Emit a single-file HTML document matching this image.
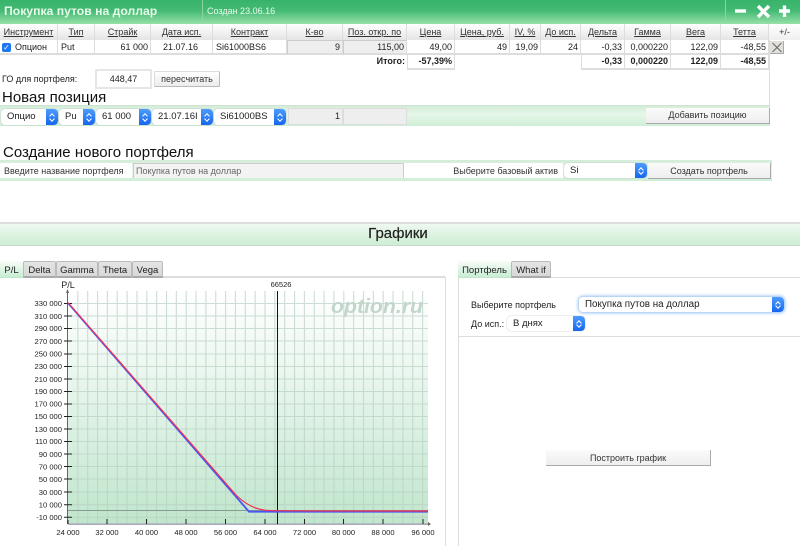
<!DOCTYPE html>
<html lang="ru"><head><meta charset="utf-8"><title>Покупка путов на доллар</title>
<style>
html,body{margin:0;padding:0;background:#fff}
#p{position:relative;width:800px;height:546px;overflow:hidden;background:#fff;font:9px "Liberation Sans",sans-serif;color:#222;filter:blur(.3px)}
#p div{position:absolute;box-sizing:border-box;white-space:nowrap}
.h{top:24px;height:16px;line-height:17px;text-align:center;background:linear-gradient(#fff,#e4e4e4);border-right:1px solid #ddd;text-decoration:underline;color:#333}
.c{top:40px;height:15px;line-height:15px;border-right:1px solid #ddd;border-bottom:2px solid #ddd;text-align:right;padding-right:2px}
.g{background:#eee!important;border-left:1px solid #ccc;border-top:1px solid #ccc;line-height:13px!important}
.t{top:55px;height:15px;line-height:13px;text-align:right;padding-right:2px;font-weight:bold;border-right:1px solid #ddd;border-bottom:2px solid #ddd}
.s{height:16px;background:#fff;border-radius:4px;box-shadow:0 0 1px #999;line-height:16px;padding-left:6px;overflow:hidden;font-size:9.500px}
.s i{position:absolute;right:0;top:0;bottom:0;width:12px;background:linear-gradient(#4d9cff,#1666ee);border-radius:0 4px 4px 0}
.s i:before,.s i:after{content:"";position:absolute;left:3.5px;width:3px;height:3px;border-left:1px solid #fff;border-top:1px solid #fff}
.s i:before{top:4.5px;transform:rotate(45deg)}
.s i:after{bottom:4.5px;transform:rotate(225deg)}
.b{background:linear-gradient(#fafafa,#eee);border-right:1px solid #aaa;border-bottom:1px solid #aaa;text-align:center;color:#333}
.tab{top:261px;height:17px;line-height:18px;text-align:center;background:linear-gradient(#e4e4e4,#d8d8d8);border:1px solid #bbb;border-bottom:2px solid #aaa;font-size:9.5px;border-radius:2px 2px 0 0}
.on{background:linear-gradient(#f8fcf8,#c8edd3);border:0;border-bottom:1px solid #bfe5cb;line-height:19px}
h1,h2{margin:0;position:absolute;font-weight:normal;color:#111;white-space:nowrap}
</style></head><body><div id="p">

<div style="left:0;top:0;width:800px;height:24px;background:linear-gradient(#37b36c,#45ba75 45%,#96e0a8)"></div>
<div style="left:202px;top:0;width:1px;height:24px;background:#8dd6a4"></div>
<div style="left:725px;top:0;width:1px;height:24px;background:#8dd6a4"></div>
<div style="left:4px;top:3px;font-size:12.200px;font-weight:bold;color:#e6fbe9;line-height:17px">Покупка путов на доллар</div>
<div style="left:207px;top:4px;font-size:9px;color:#e6fbe9;line-height:15px">Создан 23.06.16</div>
<svg style="position:absolute;left:730px;top:2px" width="70" height="20"><g stroke="#fff" stroke-width="3.4" fill="none"><path d="M5 9H16"/><path d="M28 4L39 15M39 4L28 15"/><path d="M49 9H60M54.500 3.500V15"/></g></svg>

<div class="h" style="left:0;width:58px">Инструмент</div>
<div class="h" style="left:58px;width:37px">Тип</div>
<div class="h" style="left:95px;width:56px">Страйк</div>
<div class="h" style="left:151px;width:62px">Дата исп.</div>
<div class="h" style="left:213px;width:74px">Контракт</div>
<div class="h" style="left:287px;width:56px">К-во</div>
<div class="h" style="left:343px;width:64px">Поз. откр. по</div>
<div class="h" style="left:407px;width:48px">Цена</div>
<div class="h" style="left:455px;width:55px">Цена, руб.</div>
<div class="h" style="left:510px;width:31px">IV, %</div>
<div class="h" style="left:541px;width:40px">До исп.</div>
<div class="h" style="left:581px;width:44px">Дельта</div>
<div class="h" style="left:625px;width:46px">Гамма</div>
<div class="h" style="left:671px;width:50px">Вега</div>
<div class="h" style="left:721px;width:48px">Тетта</div>
<div style="left:769px;top:24px;width:31px;height:16px;line-height:17px;text-align:center;background:linear-gradient(#fff,#eee);color:#333">+/-</div>

<div class="c" style="left:0;width:58px;text-align:left;padding-left:15px">Опцион</div>
<div style="left:2px;top:43px;width:9px;height:9px;border-radius:2px;background:#1f76f2;color:#fff;font-size:8px;line-height:9px;text-align:center">✓</div>
<div class="c" style="left:58px;width:37px;text-align:left;padding-left:3px">Put</div>
<div class="c" style="left:95px;width:56px">61 000</div>
<div class="c" style="left:151px;width:62px;text-align:center">21.07.16</div>
<div class="c" style="left:213px;width:74px;text-align:left;padding-left:3px">Si61000BS6</div>
<div class="c g" style="left:287px;width:56px">9</div>
<div class="c g" style="left:343px;width:64px">115,00</div>
<div class="c" style="left:407px;width:48px">49,00</div>
<div class="c" style="left:455px;width:55px">49</div>
<div class="c" style="left:510px;width:31px">19,09</div>
<div class="c" style="left:541px;width:40px">24</div>
<div class="c" style="left:581px;width:44px">-0,33</div>
<div class="c" style="left:625px;width:46px">0,000220</div>
<div class="c" style="left:671px;width:50px">122,09</div>
<div class="c" style="left:721px;width:48px">-48,55</div>
<div style="left:770px;top:41px;width:14px;height:13px;background:#e2e0da;border-right:1px solid #aaa;border-bottom:1px solid #aaa"></div>
<svg style="position:absolute;left:771px;top:42px" width="12" height="11"><path d="M1.500 1L10.500 10M10.500 1L1.500 10" stroke="#666" stroke-width="1"/></svg>

<div style="left:343px;top:55px;width:64px;height:14px;line-height:13px;text-align:right;padding-right:2px;font-weight:bold">Итого:</div>
<div class="t" style="left:407px;width:48px;border-left:1px solid #ddd">-57,39%</div>
<div class="t" style="left:581px;width:44px;border-left:1px solid #ddd">-0,33</div>
<div class="t" style="left:625px;width:46px">0,000220</div>
<div class="t" style="left:671px;width:50px">122,09</div>
<div class="t" style="left:721px;width:48px">-48,55</div>
<div style="left:769px;top:40px;width:1px;height:85px;background:#ddd"></div>

<div style="left:2px;top:73px;line-height:12px">ГО для портфеля:</div>
<div style="left:95px;top:69px;width:57px;height:20px;border:2px solid #e6e6e6;line-height:16px;text-align:center">448,47</div>
<div class="b" style="left:154px;top:71px;width:66px;height:16px;line-height:15px;border:1px solid #ddd;border-right-color:#bbb;border-bottom-color:#bbb;border-radius:1px;background:linear-gradient(#fff,#ececec)">пересчитать</div>
<h1 style="left:2px;top:89px;font-size:15px;line-height:18px">Новая позиция</h1>

<div style="left:0;top:105px;width:770px;height:21px;background:linear-gradient(#d3edd9,#e6f7e9 40%,#cfeed6);border-top:1px solid #cfe3d3"></div>
<div class="s" style="left:1px;top:109px;width:57px">Опцио<i></i></div>
<div class="s" style="left:59px;top:109px;width:36px">Pu<i></i></div>
<div class="s" style="left:96px;top:109px;width:55px">61 000<i></i></div>
<div class="s" style="left:152px;top:109px;width:61px">21.07.16I<i></i></div>
<div class="s" style="left:214px;top:109px;width:72px">Si61000BS<i></i></div>
<div style="left:288px;top:108px;width:55px;height:17px;background:#eee;border:1px solid #ddd;text-align:right;padding-right:2px;line-height:15px">1</div>
<div style="left:343px;top:108px;width:64px;height:17px;background:#eee;border:1px solid #ddd"></div>
<div class="b" style="left:646px;top:108px;width:124px;height:16px;line-height:15px">Добавить позицию</div>

<h1 style="left:3px;top:144px;font-size:15px;line-height:18px">Создание нового портфеля</h1>
<div style="left:0;top:160px;width:772px;height:21px;background:linear-gradient(#d3edd9,#e6f7e9 50%,#cfeed6)"></div>
<div style="left:0;top:163px;width:132px;height:15px;background:#fff;line-height:16px;padding-left:4px;color:#333">Введите название портфеля</div>
<div style="left:133px;top:163px;width:270px;height:15px;background:#f3f3f3;border:1px solid #ccc;border-right:0;border-bottom:0;line-height:15px;padding-left:2px;color:#666">Покупка путов на доллар</div>
<div style="left:403px;top:163px;width:160px;height:15px;background:#fff;border-left:1px solid #ccc;line-height:16px;text-align:right;padding-right:5px;color:#333">Выберите базовый актив</div>
<div class="s" style="left:564px;top:163px;width:83px;height:15px;line-height:16px">Si<i></i></div>
<div class="b" style="left:648px;top:163px;width:123px;height:16px;line-height:16px">Создать портфель</div>

<div style="left:0;top:222px;width:800px;height:24px;background:linear-gradient(#eef8ef,#cdeed4);border-top:2px solid #ddd;border-bottom:1px solid #c8d8cc;text-align:center;font-size:15px;line-height:20px;color:#222;padding-right:4px"><span style="-webkit-text-stroke:.2px #222">Графики</span></div>

<div style="left:0;top:276px;width:445px;height:2px;background:#ddd"></div>
<div style="left:445px;top:277px;width:1px;height:269px;background:#ddd"></div>
<div class="tab on" style="left:0;width:23px">P/L</div>
<div class="tab" style="left:23px;width:33px">Delta</div>
<div class="tab" style="left:56px;width:42px">Gamma</div>
<div class="tab" style="left:98px;width:34px">Theta</div>
<div class="tab" style="left:132px;width:31px">Vega</div>

<svg style="position:absolute;left:0;top:278px" width="445" height="268" viewBox="0 278 445 268" font-family="Liberation Sans" font-size="7.600" fill="#222">
<defs>
<linearGradient id="bg" x1="0" y1="0" x2="0" y2="1"><stop offset="0" stop-color="#fff"/><stop offset=".45" stop-color="#e4f4ea"/><stop offset="1" stop-color="#bfe6cc"/></linearGradient>
</defs>
<rect x="68" y="291" width="360" height="233" fill="url(#bg)"/>
<path fill="none" stroke="#b9cfc3" stroke-width="1.100" opacity=".7" d="M77.850 291V524M87.700 291V524M97.550 291V524M107.400 291V524M117.250 291V524M127.100 291V524M136.950 291V524M146.800 291V524M156.650 291V524M166.500 291V524M176.350 291V524M186.200 291V524M196.050 291V524M205.900 291V524M215.750 291V524M225.600 291V524M235.450 291V524M245.300 291V524M255.150 291V524M265 291V524M274.850 291V524M284.700 291V524M294.550 291V524M304.400 291V524M314.250 291V524M324.100 291V524M333.950 291V524M343.800 291V524M353.650 291V524M363.500 291V524M373.350 291V524M383.200 291V524M393.050 291V524M402.900 291V524M412.750 291V524M422.600 291V524M68 303.500H428M68 316H428M68 328.500H428M68 341H428M68 354H428M68 366.500H428M68 379H428M68 391.500H428M68 404H428M68 416.500H428M68 429H428M68 441.500H428M68 454H428M68 466.500H428M68 479H428M68 492H428M68 504.700H428M68 517.300H428"/>
<text x="331" y="313" font-size="20" font-weight="bold" font-style="italic" fill="#c2d6cb" textLength="92" lengthAdjust="spacingAndGlyphs">option.ru</text>
<path d="M68 510.500H428" stroke="#8a9a90" stroke-width="1"/>
<path d="M67.500 291V524" stroke="#666" stroke-width="1"/>
<path d="M67.500 289L66 293H69Z" fill="#666"/>
<path d="M68 524.200H428" stroke="#aab" stroke-width="1.600"/>
<path d="M428 522L431 524L428 526Z" fill="#666"/>
<g stroke="#222" stroke-width="1"><path d="M64 303.500H72M64 316H72M64 328.500H72M64 341H72M64 354H72M64 366.500H72M64 379H72M64 391.500H72M64 404H72M64 416.500H72M64 429H72M64 441.500H72M64 454H72M64 466.500H72M64 479H72M64 492H72M64 504.700H72M64 517.300H72"/>
<path d="M68 520V524M107 519V524M146.500 519V524M186 519V524M225.500 519V524M265 519V524M304.500 519V524M343.500 519V524M383 519V524M423 519V524"/></g>
<g text-anchor="end">
<text x="62" y="306">330 000</text><text x="62" y="319">310 000</text><text x="62" y="331">290 000</text><text x="62" y="344">270 000</text><text x="62" y="356.500">250 000</text><text x="62" y="369">230 000</text><text x="62" y="382">210 000</text><text x="62" y="394">190 000</text><text x="62" y="406.500">170 000</text><text x="62" y="419">150 000</text><text x="62" y="432">130 000</text><text x="62" y="444">110 000</text><text x="62" y="457">90 000</text><text x="62" y="469.500">70 000</text><text x="62" y="482">50 000</text><text x="62" y="495">30 000</text><text x="62" y="507.500">10 000</text><text x="62" y="520">-10 000</text>
</g>
<g text-anchor="middle">
<text x="68" y="535">24 000</text><text x="107" y="535">32 000</text><text x="146.500" y="535">40 000</text><text x="186" y="535">48 000</text><text x="225.500" y="535">56 000</text><text x="265" y="535">64 000</text><text x="304.500" y="535">72 000</text><text x="343.500" y="535">80 000</text><text x="383" y="535">88 000</text><text x="423" y="535">96 000</text>
<text x="68" y="288" font-size="9">P/L</text>
<text x="281" y="287" font-size="7.500">66526</text>
</g>
<path d="M277.500 291V524" stroke="#111" stroke-width="1"/>
<path d="M68 303L249 511.700H428" fill="none" stroke="#4a55f5" stroke-width="1.800"/>
<path d="M68 302.600L236 495C245 504 255 509 265 510.200 272 510.800 285 511 428 511" fill="none" stroke="#f03050" stroke-width="1.200"/>
</svg>

<div style="left:458px;top:277px;width:342px;height:1px;background:#ddd"></div>
<div style="left:458px;top:277px;width:1px;height:269px;background:#ddd"></div>
<div style="left:458px;top:336px;width:342px;height:1px;background:#ddd"></div>
<div class="tab on" style="left:458px;width:53px">Портфель</div>
<div class="tab" style="left:511px;width:40px">What if</div>
<div style="left:471px;top:298px;line-height:14px;color:#222">Выберите портфель</div>
<div class="s" style="left:579px;top:297px;width:205px;height:15px;line-height:15px;font-size:9.800px;box-shadow:0 0 3px 1px #8ebcf5">Покупка путов на доллар<i></i></div>
<div style="left:471px;top:317px;line-height:14px;color:#222">До исп.:</div>
<div class="s" style="left:507px;top:316px;width:78px;height:15px;line-height:15px">В днях<i></i></div>
<div class="b" style="left:546px;top:450px;width:165px;height:16px;line-height:16px">Построить график</div>
</div></body></html>
